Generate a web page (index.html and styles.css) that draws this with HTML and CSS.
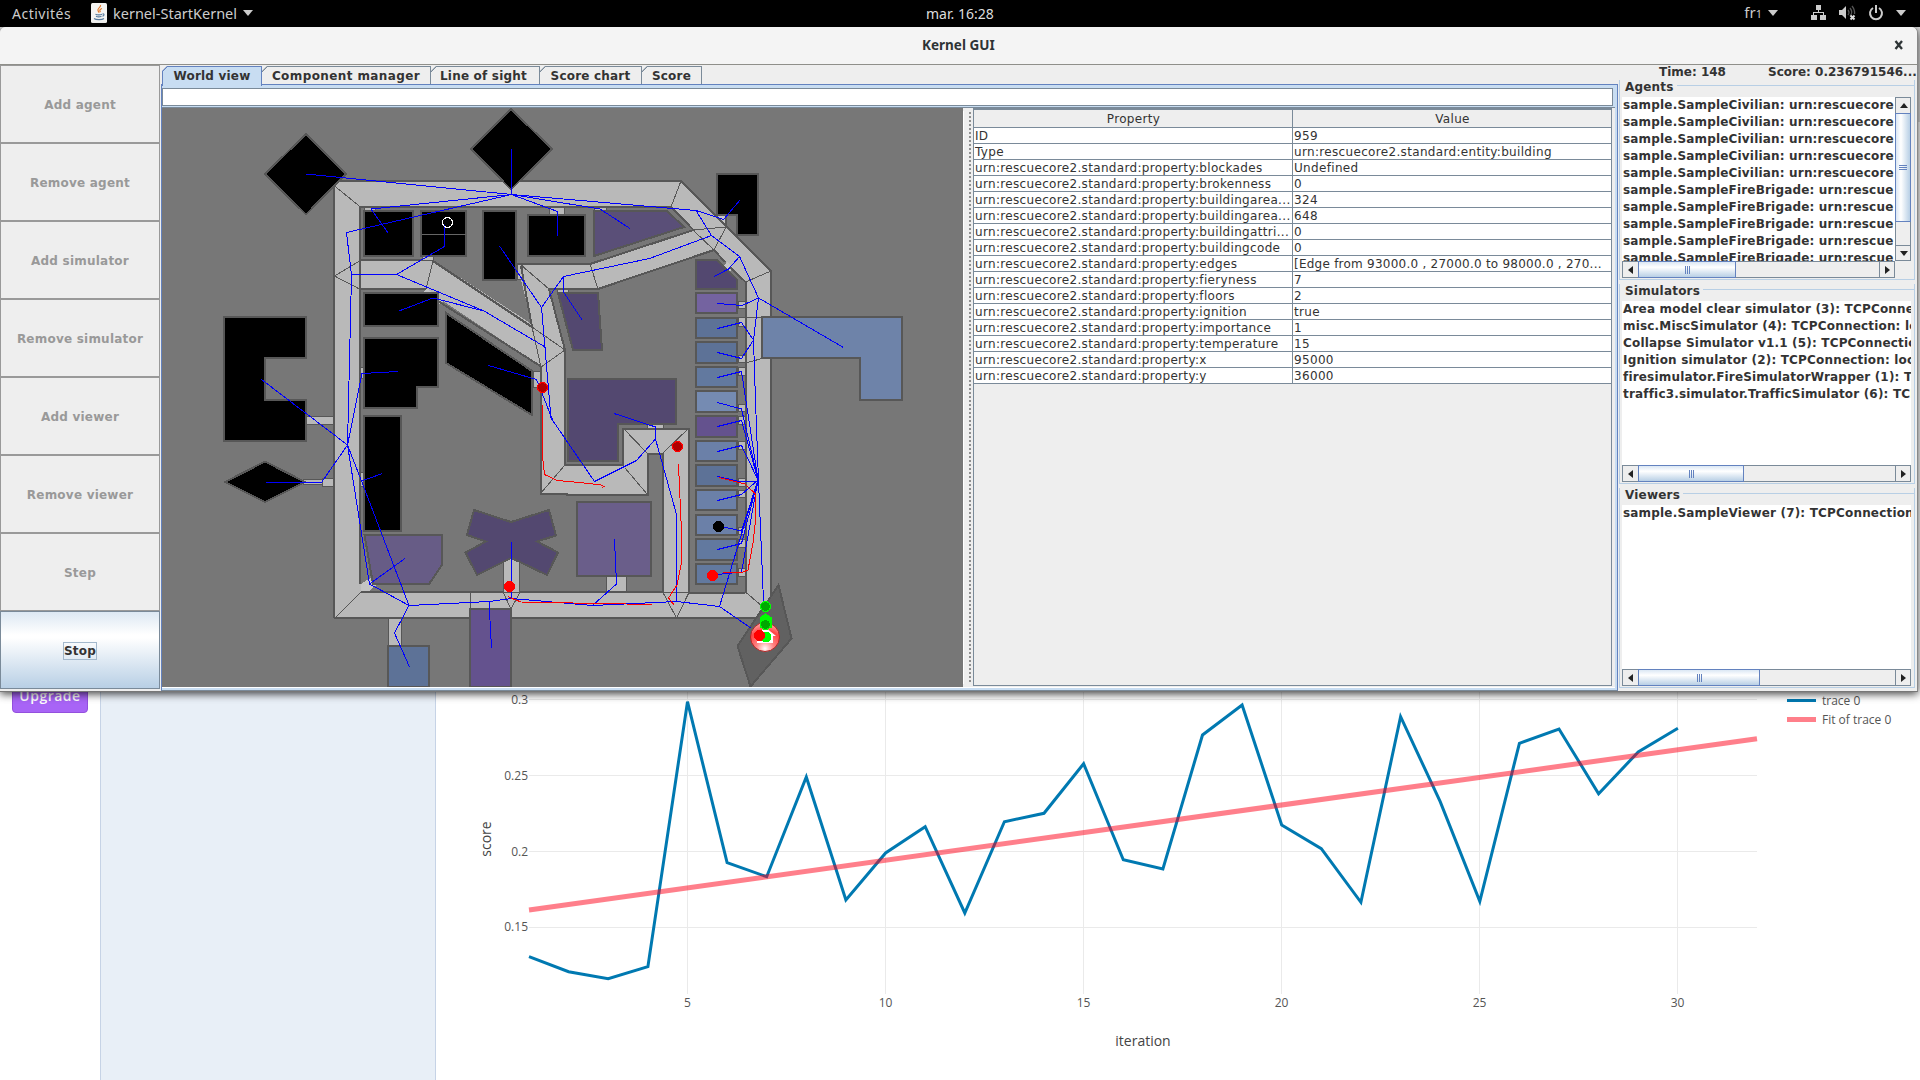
FILE: index.html
```html
<!DOCTYPE html>
<html lang="fr">
<head>
<meta charset="utf-8">
<title>Kernel GUI</title>
<link rel="stylesheet" href="styles.css">
</head>
<body>
<header class="topbar">
  <span class="activities">Activités</span>
  <div class="app-menu">
    <svg class="java" width="16" height="20" viewBox="0 0 16 20"><rect width="16" height="20" rx="1.5" fill="#f4f4f2"/><path d="M9.5 2c1 2-3.5 3.200-2.500 5.500.3.800 1 1.300 1 2.300M11 5.500c-2 .8-3 1.800-1.500 3.500" fill="none" stroke="#e47b2c" stroke-width="1.200"/><path d="M4.500 11.300c1.500.8 5 .8 6.500 0M5 13.300c1.300.6 4 .6 5.500 0M3 15.500c2 1.500 8 1.500 10 0M11.500 11c2-.5 2 1.500 0 2.300" fill="none" stroke="#56799c" stroke-width="1.100"/></svg>
    <span class="app-name">kernel-StartKernel</span>
    <i class="caret"></i>
  </div>
  <span class="clock">mar. 16:28</span>
  <div class="status">
    <span class="lang">fr<small>1</small></span><i class="caret caret-lang"></i>
    <svg class="net" width="16" height="16" viewBox="0 0 16 16" shape-rendering="crispEdges"><path d="M5 0h5v5H5zM0 10h6v5H0zM9 10h6v5H9zM7 5h1v3H7zM2 7h11v1H2zM2 7h1v3H2zM12 7h1v3h-1z" fill="#ccc"/></svg>
    <svg class="vol" width="18" height="17" viewBox="0 0 18 17"><path d="M0 5h3l4-4v13l-4-4H0z" fill="#ccc"/><path d="M9 5q2 2.500 0 5M11 3q3.500 4.500 0 8M13 1q3 3.500 2.500 8" stroke="#555" stroke-width="1.300" fill="none"/><path d="M11.500 10.500l4 4m0-4l-4 4" stroke="#ddd" stroke-width="2"/></svg>
    <svg class="power" width="16" height="16" viewBox="0 0 16 16"><path d="M5 3a6 6 0 1 0 6 0M8 0v8" stroke="#ccc" stroke-width="2" fill="none"/></svg>
    <i class="caret"></i>
  </div>
</header>

<main class="desktop">
  <section class="browser">
    <nav class="rail"><button class="upgrade">Upgrade</button></nav>
    <aside class="side"></aside>
    <svg class="chart" width="1483" height="389" viewBox="437 691 1483 389">
      <g class="grid"><path d="M529 699.500H1757M529 775.500H1757M529 851.500H1757M529 927.500H1757M687.500 691V994M885.500 691V994M1083.500 691V994M1281.500 691V994M1479.500 691V994M1677.500 691V994"/></g>
      <polyline class="trace" points="529,956.700 568.600,971.700 608.200,978.700 647.900,966.700 687.500,701.700 727.100,862.700 766.700,876.700 806.300,777 845.900,900 885.600,853 925.200,826.700 964.800,913 1004.400,821.700 1044,813.300 1083.600,763.700 1123.300,859.700 1162.900,869 1202.500,735 1242.100,705 1281.700,825 1321.300,848.700 1360.900,902.300 1400.600,716.700 1440.200,801.700 1479.800,901.300 1519.400,743.300 1559,729 1598.600,793.700 1638.200,752 1677.900,728.300"/>
      <path class="fit" d="M529 910L1757 738.700"/>
      <g class="ticks end"><text x="528" y="704">0.3</text><text x="528" y="780">0.25</text><text x="528" y="856">0.2</text><text x="528" y="931">0.15</text></g>
      <g class="ticks mid"><text x="687.500" y="1007">5</text><text x="885.500" y="1007">10</text><text x="1083.500" y="1007">15</text><text x="1281.500" y="1007">20</text><text x="1479.500" y="1007">25</text><text x="1677.500" y="1007">30</text></g>
      <text class="axis" x="1143" y="1046">iteration</text>
      <text class="axis" transform="translate(491 839) rotate(-90)">score</text>
      <path d="M1787 700.500H1816" stroke="#0079b1" stroke-width="3"/>
      <path d="M1787 719.500H1816" stroke="#ff7f8a" stroke-width="5"/>
      <g class="ticks"><text x="1822" y="705">trace 0</text><text x="1822" y="724">Fit of trace 0</text></g>
    </svg>
  </section>

  <section class="window">
    <div class="titlebar"><span class="wtitle">Kernel GUI</span><svg class="close" width="10" height="10" viewBox="0 0 10 10"><path d="M1.500 1l6.500 8M8 1L1.500 9" stroke="#2e3436" stroke-width="2.300"/></svg></div>
    <div class="content">
      <div class="buttons">
        <button disabled>Add agent</button><button disabled>Remove agent</button><button disabled>Add simulator</button><button disabled>Remove simulator</button><button disabled>Add viewer</button><button disabled>Remove viewer</button><button disabled>Step</button><button class="active"><span>Stop</span></button>
      </div>
      <div class="center">
        <div class="tabs">
          <div class="tab selected w1">World view</div><div class="tab w2">Component manager</div><div class="tab w3">Line of sight</div><div class="tab w4">Score chart</div><div class="tab w5">Score</div>
        </div>
        <div class="pane">
          <div class="field"></div>
          <div class="split">
            <svg class="map" width="801" height="579" viewBox="162 108 801 579" shape-rendering="crispEdges">
              <rect x="162" y="108" width="801" height="579" fill="#777"/>
              <!-- roads -->
              <g fill="#b9b9b9">
                <path fill-rule="evenodd" d="M335 181H681L771 271V618H335zM360.500 206.500V592.500H745.500V282L714 250L671 206.500z"/>
                <path d="M360 260H433L541 330V366.500L426 289.500H360zM517 264H590L693 230L714 250L598 289H549L565 350V465.500H622.500V428.500H689V592.500H663V453.500H647.500V494.500H541V367L533 328z"/>
                <path d="M693 230L726 226L714 250z"/>
              </g>
              <!-- building entrances -->
              <g fill="#b9b9b9" stroke="#575757">
                <path d="M364.500 206.500H375V211H364.500zM549 206.500H564V215H549zM594.500 206.500H606V211H594.500zM422.500 256.500H433V260.500H422.500zM517 264.500H522V279H517zM557 289H568.500V293.500H557zM360.500 367H364V378.500H360.500zM360.500 472.500H364V486.500H360.500zM533 371.500H541V387H533zM647.500 424V428.500H663V424zM306 416.500H334V424H306zM303 479.500H322V484H303zM322 478.500H334V486H322zM388.500 618V646H401V618zM606.500 576V592H626.500V576zM503.500 562L511 558L519.500 562V592H503.500z"/>
                <path d="M738 301.500H745V308.500H738zM738 317.500H745V326H738zM738 355H745V362.500H738zM738 367.500H745V375H738zM738 404.500H745V411.500H738zM738 416.500H745V424H738zM738 441.500H745V449H738zM738 478.500H745V486H738zM738 490.500H745V497.500H738zM738 527H745V534.500H738zM738 539.500H745V547H738zM738 568.500H745V576H738z"/>
              </g>
              <g fill="#c4c4c4"><path d="M422 293L427 289L444 301L438 305zM361 584L372 577L379 583L368 592H361zM717 215H726V226zM724 265L728 262L733 268L730 272z"/></g>
              <!-- kerbs -->
              <g class="kerb">
                <path d="M334 186V618M339 181H681L771 271V317M771 358V600M334 618H757M360 584V207H671L693.500 230L590 264H517M360 260H422M433 261L532 327L521 266M360 289H426M438 301L541 366.500V494H567V495H647.500V453.500H663V592.500M745.500 592.500V282L730 267M725 262L714 250L598 289H549L565 350V465H622.500V428.500H689V592.500H745M663 592H520M503 592H361M726 215V226"/>
              </g>
              <g class="seam"><path d="M334.500 186L360.500 207M334.500 276L360.500 260.500V289.500zM433 261L426 289M521 265L549 289M532 327L565 350L541 367zM681 181L671 207M590 264L598 289M693 230L726 227L714 250zM745.500 282L771 271M745.500 317.500H771M745.500 363L762 358.500M745.500 592L763 607M361 592L335 618M470.500 592V609M503 592L511 609L520 592zM663 592.500H689L676.500 618zM541 493L565 465M623 428L647 453M689 428L663 453M625 468L647 494"/></g>
              <!-- burnt-out buildings -->
              <g class="bld" fill="#000">
                <path d="M306 134L346 174L306 214.500L265 174zM511 109L552 149L511 189.500L471 149zM364 211H413V256H364zM421 211H466V256H421zM483 211H516V280H483zM528 215H585V256H528zM364 293H438V326H364zM364 338H438V387H417V408H364zM446 313L532 371V415L446 363zM224 317H306V358H265V400H306V441H224zM265 461.500L305 482L265 502L225 482zM364 416H401V531H364zM717 174H758V235H737V215H717z"/>
              </g>
              <path d="M422 234.500H466" stroke="#666"/>
              <!-- standing buildings -->
              <g class="bld">
                <path fill="#5a4f78" d="M594 211H667L684 227L594 256z"/>
                <path fill="#534870" d="M558 293H598L602 350H573zM568 379H676V424H618V461H568zM474 510L511 522L549 510L556 535.500L537 541.500L558 552.500L547 575L520 562L511 558L503 562L477 575L465.500 552.500L486 541.500L467 535zM696 260H717L737 279.500V289H696z"/>
                <path fill="#675c86" d="M364.500 535H442V565L429 584H373z"/>
                <path fill="#6a5e8a" d="M577 502H651V576H577z"/>
                <path fill="#64528e" d="M470 609H511V687H470zM696 416H737V437H696z"/>
                <path fill="#7463a0" d="M696 293H737V313H696z"/>
                <path fill="#5d7297" d="M388 646H429V687H388zM696 318H737V338H696zM696 342H737V363H696zM696 465H737V486H696z"/>
                <path fill="#62799f" d="M696 367H737V387H696zM696 539H737V560H696zM696 564H737V584H696z"/>
                <path fill="#758bb2" d="M696 391H737V412H696z"/>
                <path fill="#6b80a8" d="M696 441H737V461H696zM696 490H737V510H696zM696 515H737V535H696z"/>
                <path fill="#6e83a9" d="M762 317H902V400H860V358H762z"/>
                <path fill="#616161" d="M778.500 585L791.500 638.500L750.500 686.500L737.500 646z"/>
              </g>
              <!-- neighbour graph -->
              <g class="link">
                <path d="M511.500 194.500L306 174M511.500 194.500V149M511.500 194.500L371 209L388.500 233.500M511.500 194.500L346.500 232.500L351.500 275L396.500 274.500L444.500 246.500V225M396.500 274.500L484 311L546 347.500M484 311L433 298L399 311M511.500 194.500L557.500 211.500V235.500M511.500 194.500L600 209L630 228.500M511.500 194.500L696 210.500L723.500 219.500L740 200M696 210.500L711.500 235.500L649.500 258.500L563.500 276.500V292L582.500 320.500M563.500 276.500L541.500 307.500L499.500 246M541.500 307.500L551 418L594.500 481.500L636.500 460.500L655.500 439V427L614 413.500M655.500 439L676.500 514.500V601.500M488.500 365.500L536.500 379.500L553 421"/>
                <path d="M347.500 445L351.500 275M347.500 445L261.500 379.500M347.500 445L321.500 482.500H265.500M347.500 445L361.500 481L382.500 473.500M347.500 445L362 373.500L398.500 371.500M347.500 445L369.500 584L405 558.500M369.500 584L409 605.500L394.500 633L409.500 667M361.500 481L409 605.500L489 601.500L511.500 598.500L592.500 605.500L616.500 584L614.500 539.500M489 601.500L491.500 648.500M511.500 598.500V542M592.500 605.500L676.500 601.500L719.500 606.500L751.500 628.500"/>
                <path d="M711.500 235.500L739.500 256.500L728.500 269L714 276.500M739.500 256.500L758.500 298L843.500 347.500M758.500 298L742 305.500L717.500 303.500M758.500 298L753.500 340L741.500 322.500L717.500 328.500M753.500 340L741.500 358.500L717.500 352.500M753.500 340L755.500 401L758.500 480.500L763.500 601M717.500 377.500L741.500 371.500L758 480M717.500 402.500L741.500 409L758 480M717.500 426.500L741.500 420.500L758 480M717.500 451.500L741.500 445.500L758 480M717.500 476.500L741.500 482L758 481M717.500 500.500L741.500 494.500L758 480M724 527L741.500 531L758 480M717.500 549.500L741.500 543.500L758 480M717.500 574.500L741.500 572L758 480L719.500 606.500"/>
              </g>
              <g class="trail"><path d="M542.500 405V457L544.500 474.500L557 480.500L580 482.500L601 485L604 486.500L602 488M678.500 464L681.500 532V563L677 585L668.500 598L674.500 605.500M508 596.500L511 598L521 602L652 604.500M719 477.500L745 484L755.500 494V520L753 543L748 570L742 572.500H723"/></g>
              <!-- agents -->
              <circle cx="447.500" cy="222.500" r="5" fill="none" stroke="#fff"/>
              <g stroke="#f00"><circle cx="542.500" cy="387.500" r="5" fill="#b00000"/><circle cx="677.500" cy="446.500" r="5" fill="#b00000"/><circle cx="509.500" cy="586.500" r="5" fill="#f00"/><circle cx="712.500" cy="575.500" r="5" fill="#f00"/></g>
              <circle cx="718.500" cy="526.500" r="5.500" fill="#000"/>
              <g shape-rendering="auto"><defs><radialGradient id="refuge" cx=".5" cy=".9" r=".9"><stop offset="0" stop-color="#fff"/><stop offset=".35" stop-color="#ff8080"/><stop offset=".7" stop-color="#ff4545"/><stop offset="1" stop-color="#ffb0b0"/></radialGradient></defs><circle cx="765" cy="637" r="14.500" fill="url(#refuge)" stroke="#b02525"/><path d="M755 637L765 627L776 636H773V643H757V637z" fill="#fff"/></g>
              <g stroke="#0f0"><path d="M765.500 614L771 617.500V627H760.500V617.500z" fill="#0f0"/><circle cx="765.500" cy="606.500" r="5" fill="#00a800"/><circle cx="765.500" cy="624.500" r="5" fill="#00a800"/><circle cx="766" cy="637" r="5" fill="#0f0"/></g>
              <circle cx="759.500" cy="635.500" r="5.500" fill="#f00"/>
            </svg>
            <div class="divider"></div>
            <div class="table">
              <div class="row head"><b>Property</b><b>Value</b></div>
              <div class="row"><span>ID</span><span>959</span></div>
              <div class="row"><span>Type</span><span>urn:rescuecore2.standard:entity:building</span></div>
              <div class="row"><span>urn:rescuecore2.standard:property:blockades</span><span>Undefined</span></div>
              <div class="row"><span>urn:rescuecore2.standard:property:brokenness</span><span>0</span></div>
              <div class="row"><span>urn:rescuecore2.standard:property:buildingarea...</span><span>324</span></div>
              <div class="row"><span>urn:rescuecore2.standard:property:buildingarea...</span><span>648</span></div>
              <div class="row"><span>urn:rescuecore2.standard:property:buildingattri...</span><span>0</span></div>
              <div class="row"><span>urn:rescuecore2.standard:property:buildingcode</span><span>0</span></div>
              <div class="row"><span>urn:rescuecore2.standard:property:edges</span><span class="edges">[Edge from 93000.0 , 27000.0 to 98000.0 , 270...</span></div>
              <div class="row"><span>urn:rescuecore2.standard:property:fieryness</span><span>7</span></div>
              <div class="row"><span>urn:rescuecore2.standard:property:floors</span><span>2</span></div>
              <div class="row"><span>urn:rescuecore2.standard:property:ignition</span><span>true</span></div>
              <div class="row"><span>urn:rescuecore2.standard:property:importance</span><span>1</span></div>
              <div class="row"><span>urn:rescuecore2.standard:property:temperature</span><span>15</span></div>
              <div class="row"><span>urn:rescuecore2.standard:property:x</span><span>95000</span></div>
              <div class="row"><span>urn:rescuecore2.standard:property:y</span><span>36000</span></div>
            </div>
          </div>
        </div>
      </div>
      <div class="right">
        <div class="readout"><span class="time">Time: 148</span><span class="score">Score: 0.236791546...</span></div>
        <div class="group agents"><div class="legend"><h2>Agents</h2></div>
          <div class="scrollrow">
            <ul class="list"><li>sample.SampleCivilian: urn:rescuecore</li><li>sample.SampleCivilian: urn:rescuecore</li><li>sample.SampleCivilian: urn:rescuecore</li><li>sample.SampleCivilian: urn:rescuecore</li><li>sample.SampleCivilian: urn:rescuecore</li><li>sample.SampleFireBrigade: urn:rescue</li><li>sample.SampleFireBrigade: urn:rescue</li><li>sample.SampleFireBrigade: urn:rescue</li><li>sample.SampleFireBrigade: urn:rescue</li><li>sample.SampleFireBrigade: urn:rescue</li></ul>
            <div class="vbar"><div class="arrow"><i class="up"></i></div><div class="thumb"><i class="grip"></i></div><div class="track"></div><div class="arrow last"><i class="down"></i></div></div>
          </div>
          <div class="hbar short"><div class="arrow"><i class="prev"></i></div><div class="thumb t1"><i class="grip"></i></div><div class="track"></div><div class="arrow last"><i class="next"></i></div></div>
        </div>
        <div class="group sims"><div class="legend"><h2>Simulators</h2></div>
          <ul class="list"><li>Area model clear simulator (3): TCPConne</li><li>misc.MiscSimulator (4): TCPConnection: lo</li><li>Collapse Simulator v1.1 (5): TCPConnectio</li><li>Ignition simulator (2): TCPConnection: loc</li><li>firesimulator.FireSimulatorWrapper (1): T</li><li>traffic3.simulator.TrafficSimulator (6): TCP</li></ul>
          <div class="hbar"><div class="arrow"><i class="prev"></i></div><div class="thumb t2"><i class="grip"></i></div><div class="track"></div><div class="arrow last"><i class="next"></i></div></div>
        </div>
        <div class="group views"><div class="legend"><h2>Viewers</h2></div>
          <ul class="list"><li>sample.SampleViewer (7): TCPConnection</li></ul>
          <div class="hbar"><div class="arrow"><i class="prev"></i></div><div class="thumb t3"><i class="grip"></i></div><div class="track"></div><div class="arrow last"><i class="next"></i></div></div>
        </div>
      </div>
    </div>
  </section>
</main>
</body>
</html>
```
FILE: styles.css
```css
* { box-sizing: border-box; }
body { margin: 0; width: 1920px; height: 1080px; overflow: hidden; background: #000; font: 12px "DejaVu Sans", sans-serif; color: #333; }
h2, ul, button { margin: 0; padding: 0; font: inherit; }
ul { list-style: none; }
svg { display: block; flex: none; }

.topbar { display: grid; grid-template-columns: 91px 832px 1fr auto; height: 27px; align-items: center; padding: 0 14px 2px 0; color: #ccc; font: 15px/25px "Noto Sans", sans-serif; background: #000; }
.activities { padding-left: 12px; font-size: 14px; letter-spacing: .5px; }
.app-menu { display: flex; align-items: center; }
.app-name { margin-left: 6px; font-size: 14.500px; }
.caret { border: 5px solid transparent; border-top: 6px solid #ccc; border-bottom: 0; margin-left: 6px; }
.clock { padding-left: 3px; font-size: 14px; color: #ddd; }
.status { display: flex; align-items: center; }
.status .lang { font-size: 15px; }
.lang small { font-size: 11px; }
.net { margin-left: 33px; }
.vol { margin-left: 12px; }
.power { margin-left: 11px; }
.status .power + .caret { margin-left: 12px; }

.desktop { position: relative; height: 1053px; background: #fff; }
.browser { display: flex; height: 1053px; padding-top: 664px; }
.desktop > .browser { background: linear-gradient(#dcdcdc 95px, #fff 95px); }
.rail { width: 100px; background: #fff; padding-left: 12px; }
.upgrade { display: block; width: 76px; height: 32px; margin-top: -10px; border: 1px solid #9350dd; border-radius: 4px; background: #a864f6; color: #fff; font: 600 14px/26px "Open Sans", sans-serif; letter-spacing: .5px; padding-bottom: 3px; }
.side { width: 336px; background: #e8eff7; border: solid #c6d3e6; border-width: 0 1px; }
.chart { margin-left: 1px; background: #fff; }
.grid path { stroke: #eaeaea; }
.trace { fill: none; stroke: #0079b1; stroke-width: 3; }
.fit { stroke: #ff0018; stroke-opacity: .5; stroke-width: 5; }
.ticks { font: 12px "Open Sans", sans-serif; fill: #555; }
.end { text-anchor: end; }
.mid, .axis { text-anchor: middle; }
.axis { font: 14px "Open Sans", sans-serif; fill: #444; }

.window { position: absolute; left: 0; top: 0; width: 1918px; height: 665px; background: #eee; border-radius: 6px 6px 0 0; border-right: 1px solid #888; border-bottom: 1px solid #777; box-shadow: 0 2px 8px rgba(0,0,0,.75); display: flex; flex-direction: column; }
.titlebar { display: flex; align-items: center; height: 38px; padding-bottom: 2px; background: #f4f4f4; border-radius: 6px 6px 0 0; border-bottom: 1px solid #8f8f8a; padding-left: 922px; }
.wtitle { width: 972px; font: bold 13.500px "Noto Sans", sans-serif; color: #2e3436; }
.content { display: flex; height: 626px; }
.buttons { width: 161px; display: flex; flex-direction: column; }
.buttons button { width: 160px; height: 78px; padding-top: 2px; border: 1px solid #999; background: #eee; color: #999; font: bold 12px "DejaVu Sans", sans-serif; letter-spacing: .22px; }
.buttons .active { color: #333; border-color: #7a8a99; background: linear-gradient(#dde8f3, #fff 30%, #fff 34%, #b8cfe5); }
.active span { border: 1px solid #a3b8cc; padding: 1px 0; }

.center { width: 1457px; padding-top: 1px; font-weight: bold; }
.tabs { display: flex; height: 18px; padding-left: 1px; position: relative; z-index: 1; }
.tab { height: 18px; border: solid #7a8a99; border-width: 1px 1px 0 0; line-height: 18px; text-align: center; letter-spacing: .2px; clip-path: polygon(5px 0, 100% 0, 100% 100%, 0 100%, 0 5px); background: linear-gradient(135deg, #7a8a99 4.500px, #eee 4.600px) border-box; }
.selected { height: 20px; background: linear-gradient(135deg, #6382bf 4.500px, #c8ddf2 4.600px) border-box; border-color: #6382bf; border-left-width: 1px; }
.w1 { width: 100px; } .w2 { width: 169px; letter-spacing: .4px; } .w3 { width: 109px; padding-right: 3px; } .w4 { width: 102px; } .w5 { width: 60px; }
.pane { height: 607px; border: 1px solid #6382bf; border-bottom-color: #7a8a99; background: #c8ddf2; padding: 3px 3px 2px 0; font-weight: normal; display: flex; flex-direction: column; }
.field { width: 1451px; height: 19px; margin-bottom: 1px; border: 1px solid #7a8a99; background: #fff; }
.split { display: flex; width: 1453px; height: 581px; background: #eee; border-top: 1px solid #7a8a99; border-bottom: 1px solid #fff; }
.kerb { fill: none; stroke: #575757; stroke-width: 2; }
.seam { fill: none; stroke: #575757; stroke-width: 1; }
.bld { stroke: #575757; stroke-width: 2; }
.link { fill: none; stroke: #00f; stroke-width: 1; }
.trail { fill: none; stroke: #f00; stroke-width: 1; }
.divider { width: 10px; margin: 3px 0; border-left: 1px solid #fff; background: radial-gradient(circle, #888 0 .7px, transparent .8px) 4px 0 / 4px 4px repeat-y; }
.table { width: 639px; height: 578px; border: 1px solid #7a8a99; }
.row { display: grid; grid-template-columns: 319px 1fr; height: 16px; line-height: 17px; background: #fff; border-bottom: 1px solid #7a8a99; letter-spacing: .33px; }
.row > * { padding-left: 1px; height: 15px; white-space: pre; }
.row > :first-child { border-right: 1px solid #7a8a99; }
.row .edges { letter-spacing: .24px; }
.row.head { height: 19px; background: #eee; border-top: 1px solid #7a8a99; }
.head b { font-weight: normal; text-align: center; line-height: 18px; height: 17px; }

.right { width: 299px; font-weight: bold; padding-left: 1px; }
.readout { display: flex; height: 16px; line-height: 16px; margin-top: -1px; padding-left: 40px; white-space: nowrap; }
.time { width: 109px; }
.group { width: 296px; border: 1px solid #b8cfe5; border-top: 0; padding: 0 3px 0 2px; }
.legend { display: flex; height: 14px; margin: 0 -3px 0 -2px; }
.legend h2 { font-weight: bold; line-height: 14px; padding: 0 3px; margin-left: 2px; letter-spacing: .2px; }
.legend::after { content: ""; flex: 1; border-top: 1px solid #b8cfe5; margin-top: 5px; }
.list { background: #fff; overflow: hidden; white-space: nowrap; line-height: 17px; padding-left: 1px; letter-spacing: .18px; }
.agents { height: 200px; }
.scrollrow { display: flex; height: 164px; margin-top: 3px; }
.scrollrow .list { width: 273px; }
.sims { height: 200px; margin-top: 4px; }
.sims .list { height: 164px; margin-top: 3px; }
.views { height: 200px; margin-top: 4px; }
.views .list { height: 164px; margin-top: 3px; }
.hbar { display: flex; width: 289px; height: 17px; border: 1px solid #7a8a99; }
.short { width: 273px; }
.track { flex: 1; }
.arrow { flex: none; width: 15px; height: 15px; display: flex; align-items: center; justify-content: center; }
.last { border-left: 1px solid #7a8a99; }
.arrow i { border: 4px solid transparent; }
.arrow .prev { border-right: 5px solid #222; border-left: 0; }
.arrow .next { border-left: 5px solid #222; border-right: 0; }
.arrow .up { border-bottom: 5px solid #222; border-top: 0; }
.arrow .down { border-top: 5px solid #222; border-bottom: 0; }
.hbar .thumb { border: 1px solid #6382bf; margin: -1px 0; background: linear-gradient(#dbe7f4, #fff 35%, #b8cfe5); display: flex; align-items: center; justify-content: center; }
.t1 { width: 98px; } .t2 { width: 106px; } .t3 { width: 122px; }
.hbar .grip { width: 5px; height: 8px; background: repeating-linear-gradient(90deg, #6382bf 0 1px, transparent 1px 2px); }
.vbar { display: flex; flex-direction: column; width: 16px; border: 1px solid #7a8a99; }
.vbar .thumb { height: 109px; margin: 0 -1px; border: 1px solid #6382bf; background: linear-gradient(90deg, #dbe7f4, #fff 35%, #b8cfe5); display: flex; align-items: center; justify-content: center; }
.vbar .grip { width: 8px; height: 5px; background: repeating-linear-gradient(#6382bf 0 1px, transparent 1px 2px); }
.vbar .last { border-left: 0; border-top: 1px solid #7a8a99; }
```
